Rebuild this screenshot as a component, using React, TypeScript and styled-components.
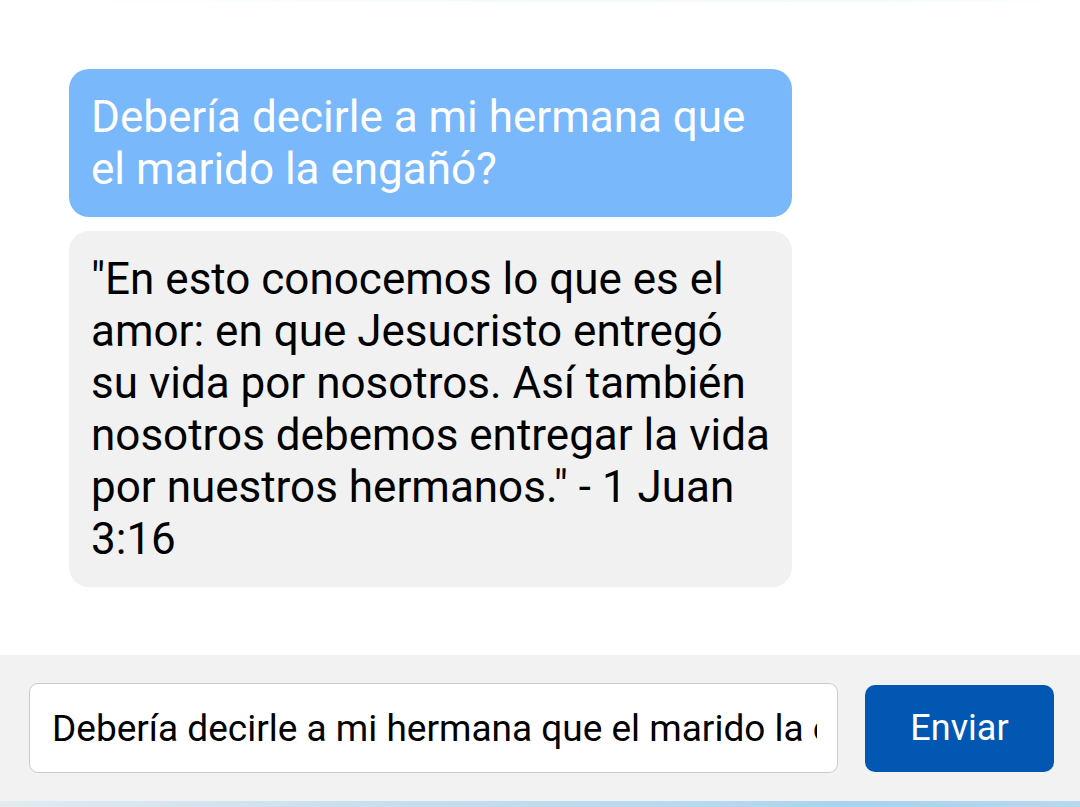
import React from "react";
import styled, { createGlobalStyle } from "styled-components";

const Global = createGlobalStyle`
  html, body { margin: 0; padding: 0; background: #ffffff; }
  body { font-family: Roboto, "Noto Sans", "Liberation Sans", sans-serif; }
  * { box-sizing: border-box; }
`;

const Page = styled.div`
  width: 1080px;
  height: 807px;
  display: flex;
  flex-direction: column;
  background: #ffffff;
  overflow: hidden;
`;

const TopEdge = styled.div`
  height: 2px;
  flex: none;
  background: linear-gradient(90deg, #ffffff, #f4fafd 50%, #f2f9fd 80%, #ffffff);
`;

const Messages = styled.div`
  flex: 1;
  display: flex;
  flex-direction: column;
  gap: 14px;
  padding: 67px 0 0 69px;
`;

const Bubble = styled.div<{ $mine?: boolean }>`
  width: 723px;
  padding: 22px 20px 22px 22px;
  border-radius: 20px;
  font-size: 44px;
  line-height: normal;
  background: ${(p) => (p.$mine ? "#79b8fb" : "#f1f1f1")};
  color: ${(p) => (p.$mine ? "#ffffff" : "#000000")};
`;

const Composer = styled.div`
  flex: none;
  height: 146px;
  background: #f2f2f2;
  display: flex;
  align-items: center;
  gap: 27px;
  padding: 0 26px 0 29px;
`;

const TextInput = styled.input`
  flex: 1;
  min-width: 0;
  height: 90px;
  border: 1.5px solid #cccccc;
  border-radius: 9px;
  background: #ffffff;
  padding: 0 20px 0 22px;
  font-family: Roboto, "Noto Sans", "Liberation Sans", sans-serif;
  font-size: 37px;
  color: #000000;
  outline: none;
`;

const SendButton = styled.button`
  flex: none;
  width: 189px;
  height: 87px;
  border: none;
  border-radius: 10px;
  background: #0157b1;
  color: #ffffff;
  font-family: Roboto, "Noto Sans", "Liberation Sans", sans-serif;
  font-size: 36px;
  cursor: pointer;
`;

const BottomEdge = styled.div`
  height: 6px;
  flex: none;
  background: linear-gradient(90deg, #e2ebf1, #c7dfef 35%, #b3d7ef 70%, #a9d2ee 78%, #b6d8ee);
`;

export default function App() {
  return (
    <>
      <Global />
      <Page>
        <TopEdge />
        <Messages>
          <Bubble $mine>Debería decirle a mi hermana que el marido la engañó?</Bubble>
          <Bubble>
            "En esto conocemos lo que es el amor: en que Jesucristo entregó su vida por
            nosotros. Así también nosotros debemos entregar la vida por nuestros
            hermanos." - 1 Juan 3:16
          </Bubble>
        </Messages>
        <Composer>
          <TextInput
            readOnly
            value="Debería decirle a mi hermana que el marido la engañó?"
          />
          <SendButton>Enviar</SendButton>
        </Composer>
        <BottomEdge />
      </Page>
    </>
  );
}
